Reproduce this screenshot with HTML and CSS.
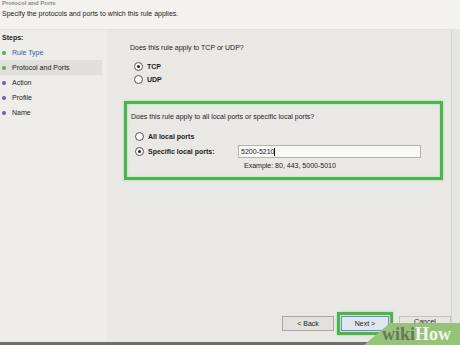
FILE: index.html
```html
<!DOCTYPE html>
<html>
<head>
  <meta charset="UTF-8">
  <title>New Inbound Rule Wizard</title>
  <link rel="stylesheet" href="styles.css">
</head>
<body>
  <div class="window">
    <div class="header">
      <div class="title">Protocol and Ports</div>
      <div class="subtitle">Specify the protocols and ports to which this rule applies.</div>
    </div>
    <div class="main">
      <div class="steps">
        <div class="stepsLabel">Steps:</div>
        <div class="step done link"><span class="dot"></span>Rule Type</div>
        <div class="step done current"><span class="dot"></span>Protocol and Ports</div>
        <div class="step"><span class="dot"></span>Action</div>
        <div class="step"><span class="dot"></span>Profile</div>
        <div class="step"><span class="dot"></span>Name</div>
      </div>
      <div class="content">
        <div class="question top">Does this rule apply to TCP or UDP?</div>
        <div class="radioRow"><span class="radio checked"></span><b>TCP</b></div>
        <div class="radioRow"><span class="radio"></span><b>UDP</b></div>

        <div class="highlight portsBox">
          <div class="question">Does this rule apply to all local ports or specific local ports?</div>
          <div class="radioRow wide"><span class="radio"></span><b>All local ports</b></div>
          <div class="radioRow wide">
            <span class="radio checked"></span><b class="portLabel">Specific local ports:</b>
            <div class="textBox">5200-5210<span class="caret"></span></div>
          </div>
          <div class="example">Example: 80, 443, 5000-5010</div>
        </div>

        <div class="buttons">
          <div class="btn">&lt; Back</div>
          <div class="highlight nextWrap"><div class="btn next">Next &gt;</div></div>
          <div class="btn cancel">Cancel</div>
        </div>
      </div>
      <div class="edge"></div>
    </div>
    <div class="taskbar"></div>
  </div>
  <div class="watermark"><span class="wiki">wiki</span><span class="how">How</span></div>
</body>
</html>
```
FILE: styles.css
```css
body {
  margin: 0;
  width: 460px;
  height: 345px;
  overflow: hidden;
  position: relative;
  background: #ebeae6;
  font-family: "Liberation Sans", Arial, sans-serif;
  font-size: 7px;
  color: #1c1c1c;
}

.window {
  display: flex;
  flex-direction: column;
  height: 345px;
}

.header {
  height: 29px;
  background: #f3f2ef;
  border-bottom: 1px solid #e2e1dd;
  padding-left: 2px;
  overflow: hidden;
}

.title {
  font-weight: bold;
  font-size: 6px;
  line-height: 7px;
  height: 9px;
  color: #8a8a88;
}

.subtitle {
  line-height: 10px;
}

.main {
  flex: 1;
  display: flex;
}

.steps {
  width: 107px;
  background: #eeede9;
}

.stepsLabel {
  font-weight: bold;
  padding-left: 2px;
  height: 15px;
  line-height: 15px;
}

.step {
  height: 15px;
  line-height: 15px;
  padding-left: 2px;
  width: 100px;
  display: flex;
  align-items: center;
}

.step.current {
  background: #e0dfdb;
}

.step.link {
  color: #3c5aa6;
}

.dot {
  width: 4px;
  height: 4px;
  border-radius: 50%;
  background: #6b5fa8;
  margin-right: 6px;
}

.step.done .dot {
  background: #5cae4a;
}

.content {
  flex: 1;
  background: #e9e8e4;
  padding: 12px 0 0 23px;
  position: relative;
}

.edge {
  width: 8px;
  border-left: 1px solid #d4d3cf;
  background: #e6e5e1;
}

.question {
  height: 12px;
  line-height: 12px;
}

.question.top {
  margin-bottom: 6px;
}

.radioRow {
  display: flex;
  align-items: center;
  height: 13px;
  padding-left: 4px;
}

.radioRow.wide {
  height: 15px;
}

.radio {
  width: 7px;
  height: 7px;
  border: 1px solid #555;
  border-radius: 50%;
  background: #fbfbfb;
  margin-right: 4px;
  position: relative;
}

.radio.checked::after {
  content: "";
  position: absolute;
  left: 2px;
  top: 2px;
  width: 3px;
  height: 3px;
  border-radius: 50%;
  background: #222;
}

.highlight {
  border: 3px solid #4cb44c;
  box-shadow: 0 0 2px #8fd88f, inset 0 0 2px #8fd88f;
}

.portsBox {
  margin: 15px 0 0 -6px;
  width: 309px;
  padding: 7px 0 6px 4px;
}

.portsBox .question {
  margin-bottom: 6px;
}

.portLabel {
  width: 90px;
}

.textBox {
  width: 183px;
  height: 13px;
  line-height: 11px;
  border: 1px solid #b5b4b0;
  background: #f8f8f7;
  padding-left: 2px;
  box-sizing: border-box;
}

.caret {
  display: inline-block;
  width: 1px;
  height: 8px;
  background: #111;
  vertical-align: middle;
}

.example {
  padding-left: 113px;
  margin-top: 2px;
  line-height: 10px;
}

.buttons {
  position: absolute;
  right: 0;
  bottom: 7px;
  display: flex;
  align-items: center;
}

.btn {
  width: 50px;
  height: 13px;
  line-height: 13px;
  text-align: center;
  border: 1px solid #a9a8a4;
  background: #e2e1dd;
  margin-left: 3px;
}

.btn.cancel {
  line-height: 9px;
  border-color: #c4c3bf;
  background: #e6e5e1;
}

.nextWrap {
  margin: 0 3px 0 3px;
  padding: 1px;
}

.nextWrap .next {
  margin: 0;
  width: 46px;
  border-color: #5b93c4;
  background: #dfe6ec;
}

.taskbar {
  height: 3px;
  background: #6e6e6a;
}

.watermark {
  position: absolute;
  right: 0;
  bottom: 0;
  width: 96px;
  height: 22px;
  background: #97c27a;
  clip-path: polygon(26px 0, 100% 0, 100% 100%, 0 100%);
  font-family: "Liberation Serif", serif;
  font-weight: bold;
  font-size: 18px;
  line-height: 22px;
  padding-left: 18px;
  box-sizing: border-box;
}

.wiki {
  color: #66775a;
}

.how {
  color: #f4f6f0;
}
```
